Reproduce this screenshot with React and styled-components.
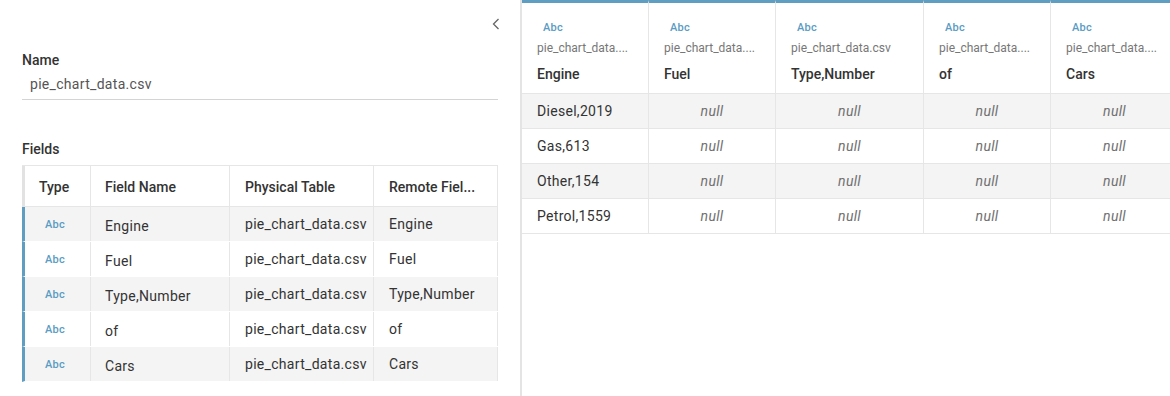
import React from 'react';
import styled, { createGlobalStyle } from 'styled-components';

const GlobalStyle = createGlobalStyle`
    body {
        margin: 0;
        background: #fff;
        font-family: Roboto, "Liberation Sans", Arial, sans-serif;
        color: #333;
    }
`;

const BLUE = '#5f9dc1';
const LINE = '#e6e6e6';

const Page = styled.div`
    display: flex;
    width: 1170px;
    height: 396px;
    overflow: hidden;
`;

const LeftPanel = styled.div`
    width: 476px;
    flex-shrink: 0;
    padding: 0 22px 0 22px;
    border-right: 2px solid #e4e4e4;
    display: flex;
    flex-direction: column;
`;

const Toolbar = styled.div`
    height: 50px;
    display: flex;
    justify-content: flex-end;
    align-items: flex-start;
    padding-top: 18px;
    box-sizing: border-box;
    margin-right: -4px;
`;

const CollapseButton = styled.button`
    background: none;
    border: none;
    padding: 0;
    width: 10px;
    height: 12px;
    cursor: pointer;
    display: flex;
`;

const Label = styled.div`
    font-size: 14px;
    line-height: 20px;
    font-weight: 500;
    color: #333;
    margin-top: ${p => p.$gap || 0}px;
`;

const NameInput = styled.div`
    height: 29px;
    border-bottom: 1px solid #d4d4d4;
    padding-left: 8px;
    font-size: 14px;
    line-height: 29px;
    letter-spacing: 0.3px;
    color: #555;
`;

const FieldTable = styled.div`
    margin-top: 6px;
    border-top: 1px solid ${LINE};
`;

const FieldRow = styled.div`
    display: grid;
    grid-template-columns: 66px 139px 144px 124px;
    height: ${p => (p.$header ? 41 : 35)}px;
    border-left: 3px solid ${p => (p.$header ? '#e2e2e2' : BLUE)};
    border-bottom: 1px solid ${p => (p.$header ? LINE : '#fff')};
    background: ${p => (p.$shade ? '#f4f4f4' : '#fff')};
    box-sizing: border-box;
`;

const FieldCell = styled.div`
    display: flex;
    align-items: center;
    padding-left: ${p => p.$pad || 14}px;
    border-right: 1px solid ${LINE};
    font-size: 14px;
    font-weight: ${p => (p.$header ? 500 : 400)};
    letter-spacing: ${p => (p.$header ? 0 : 0.3)}px;
    color: #333;
    white-space: nowrap;
    overflow: hidden;
    padding-top: ${p => p.$drop || 0}px;
`;

const TypeTag = styled.span`
    font-size: 11px;
    font-weight: 500;
    color: #5a9cc3;
    letter-spacing: 0.2px;
`;

const RightPanel = styled.div`
    flex: 1;
    overflow: hidden;
`;

const DataRow = styled.div`
    display: grid;
    grid-template-columns: 127px 127px 148px 127px 128px;
    width: 657px;
    height: ${p => (p.$header ? 94 : 35)}px;
    border-bottom: 1px solid ${LINE};
    background: ${p => (p.$shade ? '#f4f4f4' : '#fff')};
    box-sizing: border-box;
`;

const HeadCell = styled.div`
    border-top: 3px solid ${BLUE};
    border-right: 1px solid ${LINE};
    padding: 18px 0 0 15px;
    display: flex;
    flex-direction: column;
    align-items: flex-start;
    overflow: hidden;
    white-space: nowrap;
`;

const HeadTag = styled(TypeTag)`
    line-height: 14px;
    margin-left: 6px;
`;

const SourceName = styled.div`
    margin-top: 5px;
    font-size: 12px;
    line-height: 16px;
    color: #777;
`;

const ColumnName = styled.div`
    margin-top: 8px;
    font-size: 14px;
    line-height: 20px;
    font-weight: 500;
    color: #333;
`;

const DataCell = styled.div`
    display: flex;
    align-items: center;
    justify-content: ${p => (p.$null ? 'center' : 'flex-start')};
    padding-left: ${p => (p.$null ? 0 : 15)}px;
    border-right: 1px solid ${LINE};
    font-size: 14px;
    letter-spacing: 0.3px;
    font-style: ${p => (p.$null ? 'italic' : 'normal')};
    color: ${p => (p.$null ? '#707070' : '#333')};
`;

const fields = ['Engine', 'Fuel', 'Type,Number', 'of', 'Cars'];
const values = ['Diesel,2019', 'Gas,613', 'Other,154', 'Petrol,1559'];

const Chevron = () => (
    <svg width="8" height="12" viewBox="0 0 8 12">
        <polyline points="6.5,1 1.5,6 6.5,11" fill="none" stroke="#666" strokeWidth="1.3" />
    </svg>
);

export default function App() {
    return (
        <Page>
            <GlobalStyle />
            <LeftPanel>
                <Toolbar>
                    <CollapseButton aria-label="Collapse"><Chevron /></CollapseButton>
                </Toolbar>
                <Label>Name</Label>
                <NameInput>pie_chart_data.csv</NameInput>
                <Label $gap={39}>Fields</Label>
                <FieldTable>
                    <FieldRow $header>
                        <FieldCell $header $pad={14} $drop={2}>Type</FieldCell>
                        <FieldCell $header $drop={2}>Field Name</FieldCell>
                        <FieldCell $header $pad={15} $drop={2}>Physical Table</FieldCell>
                        <FieldCell $header $pad={15} $drop={2}>Remote Fiel...</FieldCell>
                    </FieldRow>
                    {fields.map((f, i) => (
                        <FieldRow key={f} $shade={i % 2 === 0}>
                            <FieldCell $pad={20}><TypeTag>Abc</TypeTag></FieldCell>
                            <FieldCell $drop={3}>{f}</FieldCell>
                            <FieldCell $pad={15}>pie_chart_data.csv</FieldCell>
                            <FieldCell $pad={15}>{f}</FieldCell>
                        </FieldRow>
                    ))}
                </FieldTable>
            </LeftPanel>
            <RightPanel>
                <DataRow $header>
                    {fields.map(f => (
                        <HeadCell key={f}>
                            <HeadTag>Abc</HeadTag>
                            <SourceName>{f === 'Type,Number' ? 'pie_chart_data.csv' : 'pie_chart_data....'}</SourceName>
                            <ColumnName>{f}</ColumnName>
                        </HeadCell>
                    ))}
                </DataRow>
                {values.map((v, i) => (
                    <DataRow key={v} $shade={i % 2 === 0}>
                        <DataCell>{v}</DataCell>
                        <DataCell $null>null</DataCell>
                        <DataCell $null>null</DataCell>
                        <DataCell $null>null</DataCell>
                        <DataCell $null>null</DataCell>
                    </DataRow>
                ))}
            </RightPanel>
        </Page>
    );
}
